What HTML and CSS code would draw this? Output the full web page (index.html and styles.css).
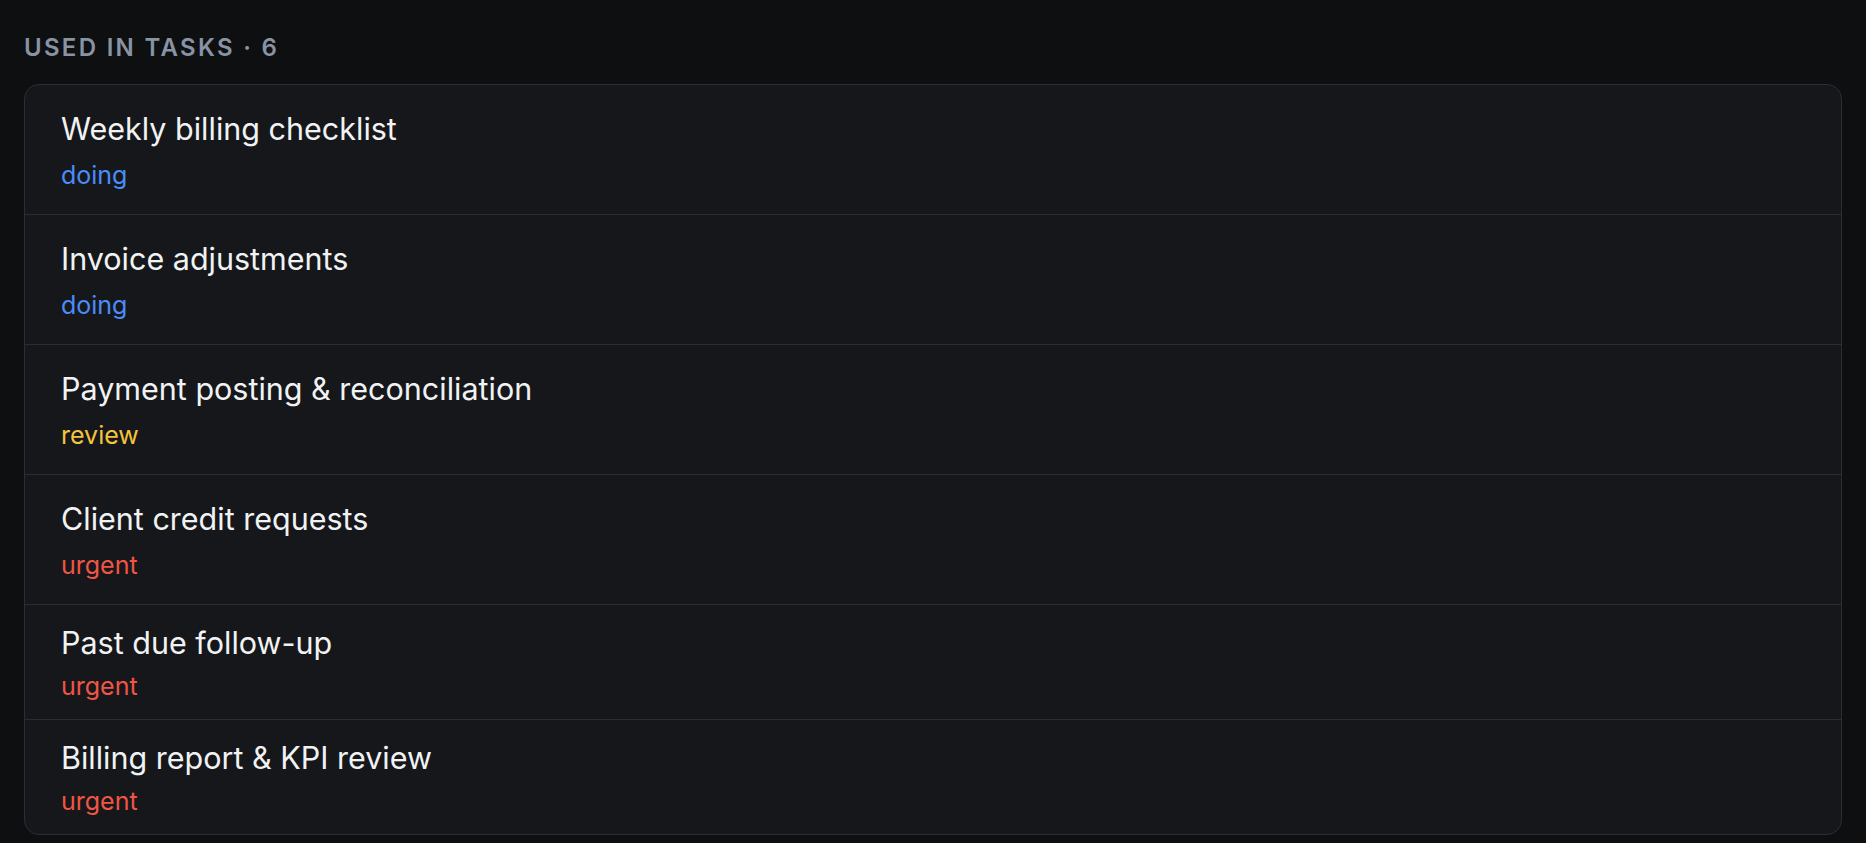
FILE: index.html
```html
<html>

<head>
  <title>Used in tasks</title>
  <link rel="stylesheet" href="styles.css">
</head>

<body>
  <div class="panel">
    <h3 class="heading">Used in tasks · 6</h3>
    <ul class="tasks">
      <li class="task">
        <span class="name">Weekly billing checklist</span>
        <span class="state doing">doing</span>
      </li>
      <li class="task">
        <span class="name">Invoice adjustments</span>
        <span class="state doing">doing</span>
      </li>
      <li class="task">
        <span class="name">Payment posting &amp; reconciliation</span>
        <span class="state review">review</span>
      </li>
      <li class="task">
        <span class="name">Client credit requests</span>
        <span class="state urgent">urgent</span>
      </li>
      <li class="task tight">
        <span class="name">Past due follow-up</span>
        <span class="state urgent">urgent</span>
      </li>
      <li class="task tight">
        <span class="name">Billing report &amp; KPI review</span>
        <span class="state urgent">urgent</span>
      </li>
    </ul>
  </div>
</body>

</html>
```

FILE: styles.css
```css
* {
  box-sizing: border-box;
  font-family: 'Inter', 'Noto Sans', sans-serif;
}

body {
  margin: 0;
  background: #0e0f11;
}

.panel {
  padding: 33px 24px 0 24px;
}

.heading {
  margin: 0 0 21px 0;
  font-size: 24px;
  line-height: 30px;
  font-weight: 600;
  letter-spacing: 2.3px;
  text-transform: uppercase;
  color: #8893a3;
}

.tasks {
  list-style: none;
  margin: 0;
  padding: 0;
  background-color: #15171a;
  border: 1px solid #2b2e34;
  border-radius: 15px;
}

.task {
  display: flex;
  flex-direction: column;
  gap: 13px;
  padding: 26px 36px 24px 36px;
  border-bottom: 1px solid #2a2d33;
}

.task:last-child {
  border-bottom: none;
}

.task.tight {
  gap: 10px;
  padding-top: 20px;
  padding-bottom: 18px;
}

.name {
  font-size: 30.5px;
  line-height: 36px;
  color: #f1f2f4;
}

.state {
  font-size: 25px;
  line-height: 30px;
}

.doing {
  color: #4b8df8;
}

.review {
  color: #f4c43e;
}

.urgent {
  color: #f05545;
}
```
